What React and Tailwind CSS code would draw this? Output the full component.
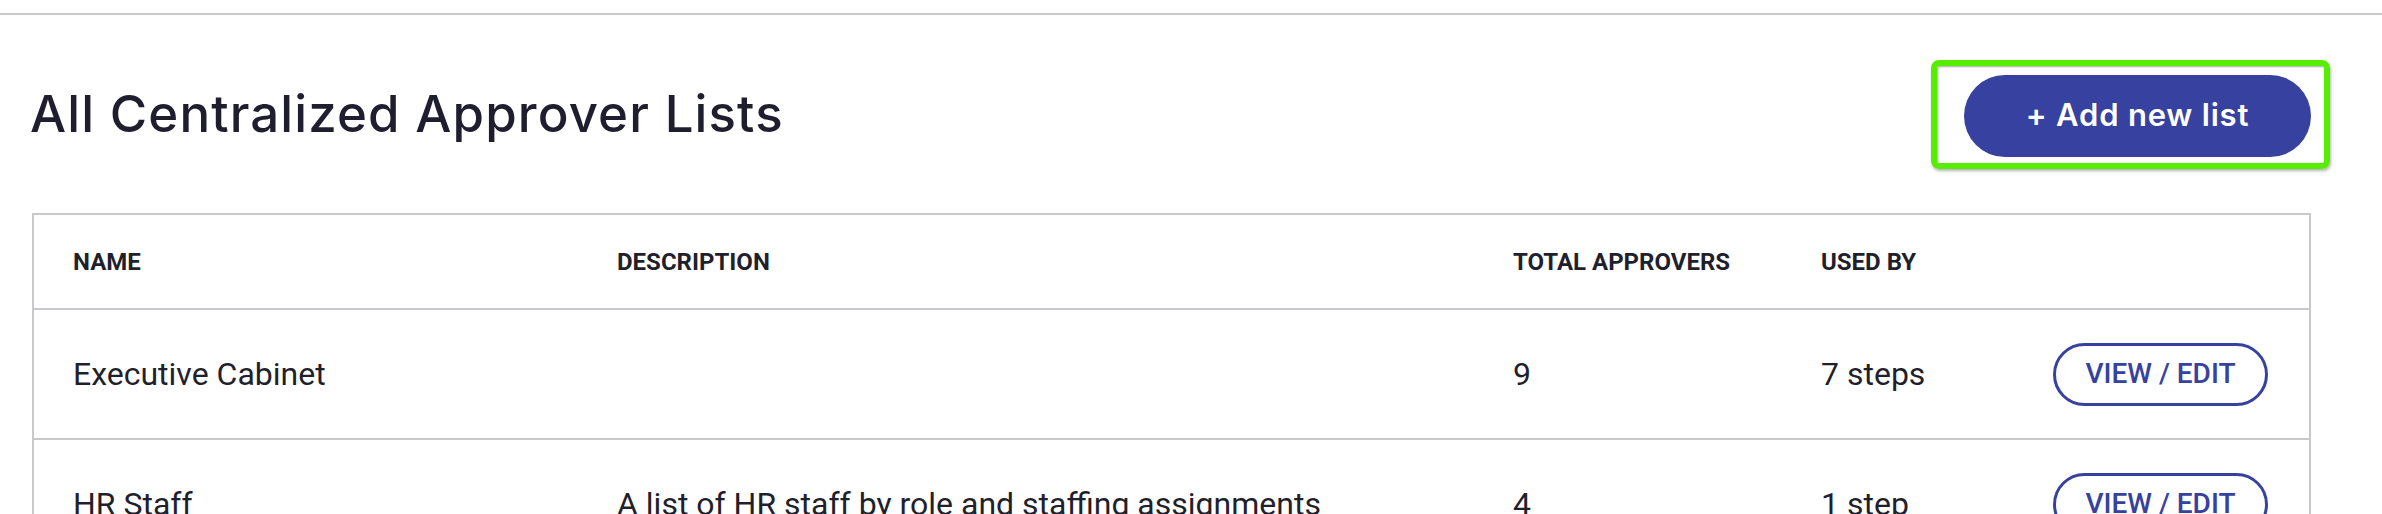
// App.jsx
import React from "react";

const lists = [
  { name: "Executive Cabinet", description: "", total: 9, usedBy: "7 steps" },
  {
    name: "HR Staff",
    description: "A list of HR staff by role and staffing assignments",
    total: 4,
    usedBy: "1 step",
  },
];

const cols = "grid grid-cols-[544px_896px_308px_271px_1fr]";

const App = () => {
  return (
    <div className="min-h-screen bg-white font-['Roboto',sans-serif] text-[#1f1f2d]">
      {/* top rule */}
      <div className="pt-[13px]">
        <div className="h-[2px] bg-[#c9c8cd]" />
      </div>

      {/* page heading */}
      <div className="flex items-center justify-between h-[198px] pl-[30px] pr-[52px]">
        <h1 className="font-['Inter',sans-serif] font-medium text-[51px] tracking-[1.1px] text-[#1f1e2e]">
          All Centralized Approver Lists
        </h1>
        <div className="border-[6px] border-[#57ed00] rounded-[8px] pl-[27px] pr-[13px] pt-[9px] pb-[6px] shadow-[1px_2px_3px_rgba(0,0,0,0.3),inset_1px_1px_2px_rgba(0,0,0,0.35)]">
          <button className="w-[347px] h-[82px] rounded-full bg-[#37419f] text-white font-['Inter',sans-serif] font-semibold text-[31px] tracking-[0.8px]">
            + Add new list
          </button>
        </div>
      </div>

      {/* table */}
      <div className="ml-[32px] mr-[71px] border-2 border-[#c9c8cd]">
        <div className={`${cols} h-[95px] items-center border-b-2 border-[#c9c8cd] font-bold text-[24px] uppercase`}>
          <div className="pl-[39px]">Name</div>
          <div className="pl-[39px]">Description</div>
          <div className="pl-[39px]">Total Approvers</div>
          <div className="pl-[39px]">Used By</div>
          <div />
        </div>
        {lists.map((l) => (
          <div
            key={l.name}
            className={`${cols} h-[130px] items-center border-b-2 border-[#c9c8cd] text-[32px]`}
          >
            <div className="pl-[39px]">{l.name}</div>
            <div className="pl-[39px]">{l.description}</div>
            <div className="pl-[39px]">{l.total}</div>
            <div className="pl-[39px]">{l.usedBy}</div>
            <div className="flex justify-end pr-[41px]">
              <button className="w-[215px] h-[63px] rounded-full border-[3px] border-[#37419f] text-[#37419f] font-medium text-[28px]">
                VIEW / EDIT
              </button>
            </div>
          </div>
        ))}
      </div>
    </div>
  );
};

export default App;
